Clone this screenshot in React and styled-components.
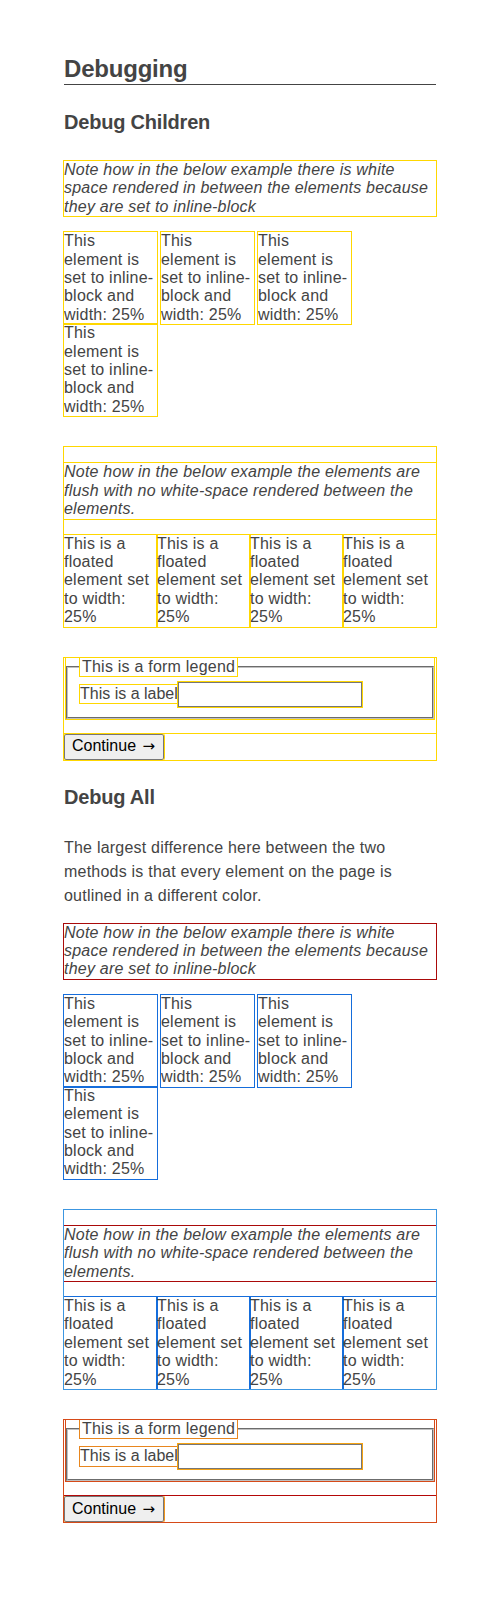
import React from 'react'
import styled, { createGlobalStyle } from 'styled-components'

const GlobalStyle = createGlobalStyle`
  body {
    margin: 0;
    background: #fff;
    font-family: "Liberation Sans", Arial, sans-serif;
    letter-spacing: 0.22px;
    color: #444;
  }
`

// in "children" mode every outline is gold, in "all" mode each tag gets its own colour
const debugLine = (color) => ({ $all }) => `outline: 1px solid ${$all ? color : 'gold'};`

const Page = styled.div`
    padding: 54px 64px 80px;
`

const Title = styled.h1`
    margin: 0;
    font-size: 24px;
    line-height: 30px;
    font-weight: 700;
    letter-spacing: -0.2px;
    border-bottom: 1px solid #444;
`

const SectionTitle = styled.h2`
    margin: 25px 0 26px;
    font-size: 20px;
    line-height: 25px;
    font-weight: 700;
    letter-spacing: -0.2px;
`

const Intro = styled.p`
    margin: 0 0 16px;
    font-size: 16px;
    line-height: 1.5;
`

const Note = styled.p`
    margin: ${({ $flush }) => ($flush ? '16px 0' : '0 0 16px')};
    font-size: 16px;
    line-height: 18.4px;
    font-style: italic;
    grid-column: 1 / -1;
    ${debugLine('#aa0a0a')}
`

const InlineRow = styled.div`
    display: flex;
    flex-wrap: wrap;
    column-gap: 4px;
    margin-bottom: 31px;
`

const Box = styled.div`
    flex: none;
    width: 25%;
    font-size: 16px;
    line-height: 18.4px;
    ${debugLine('#156ddb')}
`

const FloatGroup = styled.div`
    display: grid;
    grid-template-columns: repeat(4, 1fr);
    margin-bottom: 31px;
    ${debugLine('#3c96e1')}
    ${Box} {
        width: auto;
    }
`

const Form = styled.form`
    margin-top: 1px;
    font-size: 16px;
    line-height: 18.4px;
    ${debugLine('#d64a18')}
`

const Fieldset = styled.fieldset`
    margin: 0 2px;
    padding: 5.6px 12px 10px;
    border: 2px groove rgb(192, 192, 192);
    ${debugLine('#d64a18')}
`

const Legend = styled.legend`
    padding: 0 2px;
    ${debugLine('#e8861e')}
`

const Field = styled.div`
    display: flex;
    align-items: center;
`

const Label = styled.label`
    letter-spacing: 0;
    ${debugLine('#e8861e')}
`

const Input = styled.input`
    box-sizing: border-box;
    width: 184px;
    height: 25px;
    margin: 0;
    padding: 1px 3px;
    font: inherit;
    border: 1px solid #767676;
    border-radius: 0;
    background: #fff;
    ${debugLine('#f5a312')}
`

const ButtonRow = styled.p`
    margin: 15px 0 0;
    ${debugLine('#b40808')}
`

const Button = styled.button`
    display: block;
    height: 26px;
    padding: 1px 8px 1px 7px;
    font: inherit;
    color: #000;
    background: #efefef;
    border: 1px solid #767676;
    border-radius: 2px;
    ${debugLine('#f0951c')}
`

const Arrow = styled.span`
    margin-left: 2px;
    font-family: "DejaVu Sans", sans-serif;
    font-size: 15px;
`

const INLINE_TEXT = 'This element is set to inline-block and width: 25%'
const FLOAT_TEXT = 'This is a floated element set to width: 25%'

function Examples({ all }) {
    return (
        <>
            <Note $all={all}>
                Note how in the below example there is white space rendered in between the elements because they are set to inline-block
            </Note>
            <InlineRow>
                {[1, 2, 3, 4].map((n) => (
                    <Box key={n} $all={all}>{INLINE_TEXT}</Box>
                ))}
            </InlineRow>
            <FloatGroup $all={all}>
                <Note $flush $all={all}>
                    Note how in the below example the elements are flush with no white-space rendered between the elements.
                </Note>
                {[1, 2, 3, 4].map((n) => (
                    <Box key={n} $all={all}>{FLOAT_TEXT}</Box>
                ))}
            </FloatGroup>
            <Form $all={all} onSubmit={(e) => e.preventDefault()}>
                <Fieldset $all={all}>
                    <Legend $all={all}>This is a form legend</Legend>
                    <Field>
                        <Label $all={all}>This is a label</Label>
                        <Input $all={all} type="text" />
                    </Field>
                </Fieldset>
                <ButtonRow $all={all}>
                    <Button $all={all} type="button">Continue <Arrow>→</Arrow></Button>
                </ButtonRow>
            </Form>
        </>
    )
}

export default function App() {
    return (
        <Page>
            <GlobalStyle />
            <Title>Debugging</Title>
            <SectionTitle>Debug Children</SectionTitle>
            <Examples all={false} />
            <SectionTitle>Debug All</SectionTitle>
            <Intro>
                The largest difference here between the two methods is that every element on the page is outlined in a different color.
            </Intro>
            <Examples all />
        </Page>
    )
}
